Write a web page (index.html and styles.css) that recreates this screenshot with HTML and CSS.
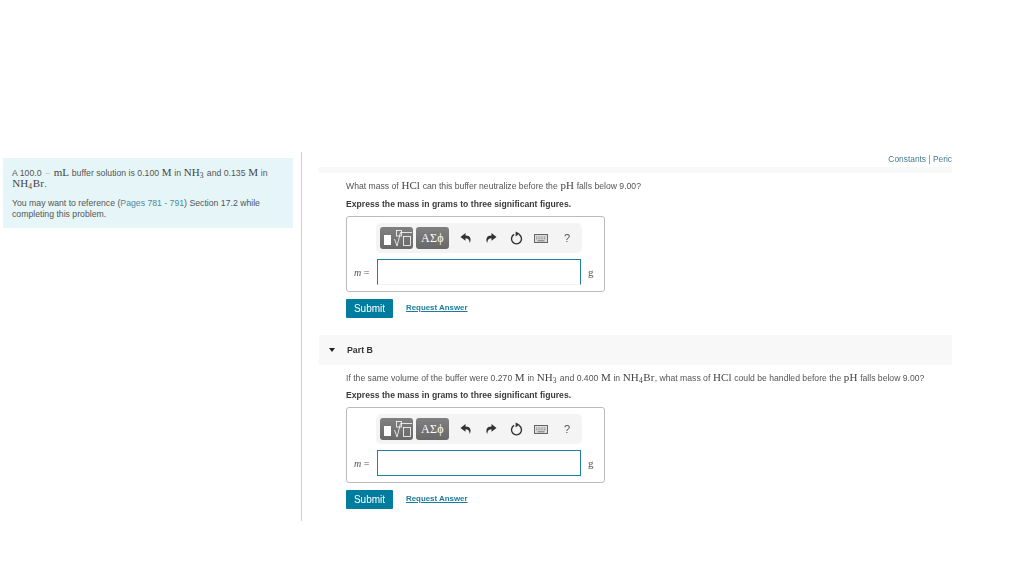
FILE: index.html
```html
<!DOCTYPE html>
<html lang="en">
<head>
<meta charset="utf-8">
<title>Buffer problem</title>
<link rel="stylesheet" href="styles.css">
</head>
<body>
<main class="page">
  <aside class="intro">
    <div class="intro-box">
      <p class="intro-p">A 100.0 <span class="dash">&minus;</span> <span class="m">mL</span> buffer solution is 0.100 <span class="m">M</span> in <span class="m">NH<sub>3</sub></span> and 0.135 <span class="m">M</span> in <span class="m">NH<sub>4</sub>Br</span>.</p>
      <p class="intro-p intro-note">You may want to reference (<span class="ref">Pages 781 - 791</span>) Section 17.2 while completing this problem.</p>
    </div>
  </aside>
  <section class="content">
    <div class="links"><span class="link-text">Constants</span> | <span class="link-text">Peric</span></div>
    <div class="band-thin"></div>
    <div class="part part-a">
      <p class="question">What mass of <span class="m">HCl</span> can this buffer neutralize before the <span class="m">pH</span> falls below 9.00?</p>
      <p class="instruction">Express the mass in grams to three significant figures.</p>
      <div class="answer">
        <div class="toolbar">
          <span class="tool-btn tool-templates">
            <span class="tpl-block"></span>
            <svg class="tpl-icon" width="20" height="17" viewBox="0 0 20 17"><rect x="3.5" y="0.5" width="5" height="5.5" fill="none" stroke="#fff" stroke-width="0.8"/><path d="M1.5 9 L4 16 L7.5 2.5 H19" fill="none" stroke="#fff" stroke-width="0.8"/><rect x="10.5" y="6.5" width="7" height="9" fill="none" stroke="#fff" stroke-width="0.8"/></svg>
          </span>
          <span class="tool-btn tool-greek">&Alpha;&Sigma;&#981;</span>
          <svg class="ico ico-undo" width="12" height="12" viewBox="0 0 12 12"><path d="M5.5 1 L0.5 5 L5.5 8.8 V6.2 C8 6.2 9.4 7.6 9.8 11 C11.6 7.2 10.4 3.6 5.5 3.6 Z" fill="#333"/></svg>
          <svg class="ico ico-redo" width="12" height="12" viewBox="0 0 12 12"><path d="M6.5 1 L11.5 5 L6.5 8.8 V6.2 C4 6.2 2.6 7.6 2.2 11 C0.4 7.2 1.6 3.6 6.5 3.6 Z" fill="#333"/></svg>
          <svg class="ico ico-reset" width="13" height="14" viewBox="0 0 13 14"><path d="M4.2 3.4 A5 5 0 1 0 8.8 3.4" fill="none" stroke="#333" stroke-width="1.4"/><path d="M5.6 0.4 L9.6 2.6 L5.6 5.6 Z" fill="#333"/></svg>
          <svg class="ico ico-kbd" width="14" height="9" viewBox="0 0 14 9"><rect x="0.5" y="0.5" width="13" height="8" fill="#ddd" stroke="#666"/><path d="M2 3 H12 M2 4.8 H12" stroke="#888" stroke-dasharray="1 0.6"/><path d="M3.5 6.8 H10.5" stroke="#777"/></svg>
          <span class="tool-help">?</span>
        </div>
        <div class="answer-row">
          <span class="var"><i>m</i> =</span>
          <span class="input input-open"></span>
          <span class="unit">g</span>
        </div>
      </div>
      <div class="actions">
        <span class="submit">Submit</span>
        <span class="request">Request Answer</span>
      </div>
    </div>
    <div class="part-head">
      <span class="caret"></span>
      <span class="part-title">Part B</span>
    </div>
    <div class="part part-b">
      <p class="question">If the same volume of the buffer were 0.270 <span class="m">M</span> in <span class="m">NH<sub>3</sub></span> and 0.400 <span class="m">M</span> in <span class="m">NH<sub>4</sub>Br</span>, what mass of <span class="m">HCl</span> could be handled before the <span class="m">pH</span> falls below 9.00?</p>
      <p class="instruction">Express the mass in grams to three significant figures.</p>
      <div class="answer">
        <div class="toolbar">
          <span class="tool-btn tool-templates">
            <span class="tpl-block"></span>
            <svg class="tpl-icon" width="20" height="17" viewBox="0 0 20 17"><rect x="3.5" y="0.5" width="5" height="5.5" fill="none" stroke="#fff" stroke-width="0.8"/><path d="M1.5 9 L4 16 L7.5 2.5 H19" fill="none" stroke="#fff" stroke-width="0.8"/><rect x="10.5" y="6.5" width="7" height="9" fill="none" stroke="#fff" stroke-width="0.8"/></svg>
          </span>
          <span class="tool-btn tool-greek">&Alpha;&Sigma;&#981;</span>
          <svg class="ico ico-undo" width="12" height="12" viewBox="0 0 12 12"><path d="M5.5 1 L0.5 5 L5.5 8.8 V6.2 C8 6.2 9.4 7.6 9.8 11 C11.6 7.2 10.4 3.6 5.5 3.6 Z" fill="#333"/></svg>
          <svg class="ico ico-redo" width="12" height="12" viewBox="0 0 12 12"><path d="M6.5 1 L11.5 5 L6.5 8.8 V6.2 C4 6.2 2.6 7.6 2.2 11 C0.4 7.2 1.6 3.6 6.5 3.6 Z" fill="#333"/></svg>
          <svg class="ico ico-reset" width="13" height="14" viewBox="0 0 13 14"><path d="M4.2 3.4 A5 5 0 1 0 8.8 3.4" fill="none" stroke="#333" stroke-width="1.4"/><path d="M5.6 0.4 L9.6 2.6 L5.6 5.6 Z" fill="#333"/></svg>
          <svg class="ico ico-kbd" width="14" height="9" viewBox="0 0 14 9"><rect x="0.5" y="0.5" width="13" height="8" fill="#ddd" stroke="#666"/><path d="M2 3 H12 M2 4.8 H12" stroke="#888" stroke-dasharray="1 0.6"/><path d="M3.5 6.8 H10.5" stroke="#777"/></svg>
          <span class="tool-help">?</span>
        </div>
        <div class="answer-row">
          <span class="var"><i>m</i> =</span>
          <span class="input"></span>
          <span class="unit">g</span>
        </div>
      </div>
      <div class="actions">
        <span class="submit">Submit</span>
        <span class="request">Request Answer</span>
      </div>
    </div>
  </section>
</main>
</body>
</html>
```
FILE: styles.css
```css
* { box-sizing: border-box; }
html, body { margin: 0; padding: 0; background: #fff; }
body { font-family: "Liberation Sans", Arial, sans-serif; color: #555; width: 1024px; height: 576px; overflow: hidden; }
p { margin: 0; }
.page { display: flex; align-items: flex-start; padding: 152px 0 0 3px; filter: blur(0.3px); }
.intro { width: 298px; padding: 6px 8px 0 0; flex: none; }
.intro-box { background: #e6f5f7; width: 290px; height: 70px; padding: 9px 12px 0 9px; font-size: 8.7px; line-height: 10px; }
.intro-note { margin-top: 9px; line-height: 11px; }
.ref { color: #4f8aa0; }
.dash { color: #bbb; margin: 0 1px; }
.m { font-family: "Liberation Serif", serif; font-size: 11px; color: #444; letter-spacing: 0.1px; margin: 0 0.25px; }
sub { font-size: 7.5px; line-height: 0; vertical-align: -2px; margin-right: 0.5px; }
.content { width: 651px; height: 369px; border-left: 1px solid #c9d0dc; flex: none; }
.links { height: 15px; padding-top: 2px; text-align: right; font-size: 8.4px; line-height: 11px; color: #777; white-space: nowrap; overflow: hidden; }
.link-text { color: #4a7a92; }
.band-thin { height: 6px; margin-left: 17px; background: #f8f8f8; }
.part { padding-left: 44px; padding-top: 6px; }
.question { font-size: 8.65px; line-height: 13px; height: 13px; white-space: nowrap; }
.instruction { font-size: 8.6px; line-height: 11px; font-weight: 700; color: #3a3a3a; letter-spacing: 0.02px; }
.part-a .instruction { margin-top: 7px; }
.part-b .instruction { margin-top: 6px; }
.answer { width: 259px; height: 76px; margin-top: 6px; border: 1px solid #bbb; border-radius: 3px; padding: 6px 0 0 29px; }
.toolbar { width: 206px; height: 30px; background: #f4f4f4; border-radius: 5px; display: flex; align-items: center; padding-left: 4px; }
.tool-btn { height: 22px; background: linear-gradient(#808080, #686868); border-radius: 3px; color: #fff; display: flex; align-items: center; justify-content: center; flex: none; }
.tool-templates { width: 33px; padding: 0 2px 0 5px; gap: 2px; }
.tpl-block { width: 7px; height: 10px; background: #fff; margin-top: 3px; flex: none; }
.tpl-icon { flex: none; }
.tool-greek { width: 33px; margin-left: 3px; font-family: "Liberation Serif", serif; font-size: 12px; letter-spacing: 0.3px; }
.ico { flex: none; display: block; }
.ico-undo { margin-left: 11px; }
.ico-redo { margin-left: 13px; }
.ico-reset { margin-left: 13px; }
.ico-kbd { margin-left: 11px; }
.tool-help { margin-left: 16px; font-size: 11px; color: #555; }
.answer-row { display: flex; align-items: center; margin-top: 6px; margin-left: -25px; }
.var { width: 26px; padding-left: 3px; font-family: "Liberation Serif", serif; font-size: 10px; color: #555; white-space: nowrap; }
.input { width: 204px; height: 26px; border: 1px solid #1f7f9f; flex: none; }
.input-open { border-bottom: 1px solid #eef4f8; }
.unit { margin-left: 7px; font-family: "Liberation Serif", serif; font-size: 11px; color: #555; }
.actions { display: flex; align-items: center; margin-top: 7px; }
.submit { width: 47px; height: 19px; background: #007c9e; color: #fff; font-size: 10px; line-height: 19px; text-align: center; border-radius: 1px; }
.request { margin-left: 13px; margin-top: -2px; font-size: 7.9px; font-weight: 700; color: #1b7b9c; text-decoration: underline; }
.part-head { display: flex; align-items: center; height: 30px; margin-top: 17px; margin-left: 17px; background: #f8f8f8; padding-left: 10px; }
.caret { width: 0; height: 0; border-left: 3.5px solid transparent; border-right: 3.5px solid transparent; border-top: 4px solid #222; }
.part-title { margin-left: 12px; font-size: 8.8px; font-weight: 700; color: #333; }
```
